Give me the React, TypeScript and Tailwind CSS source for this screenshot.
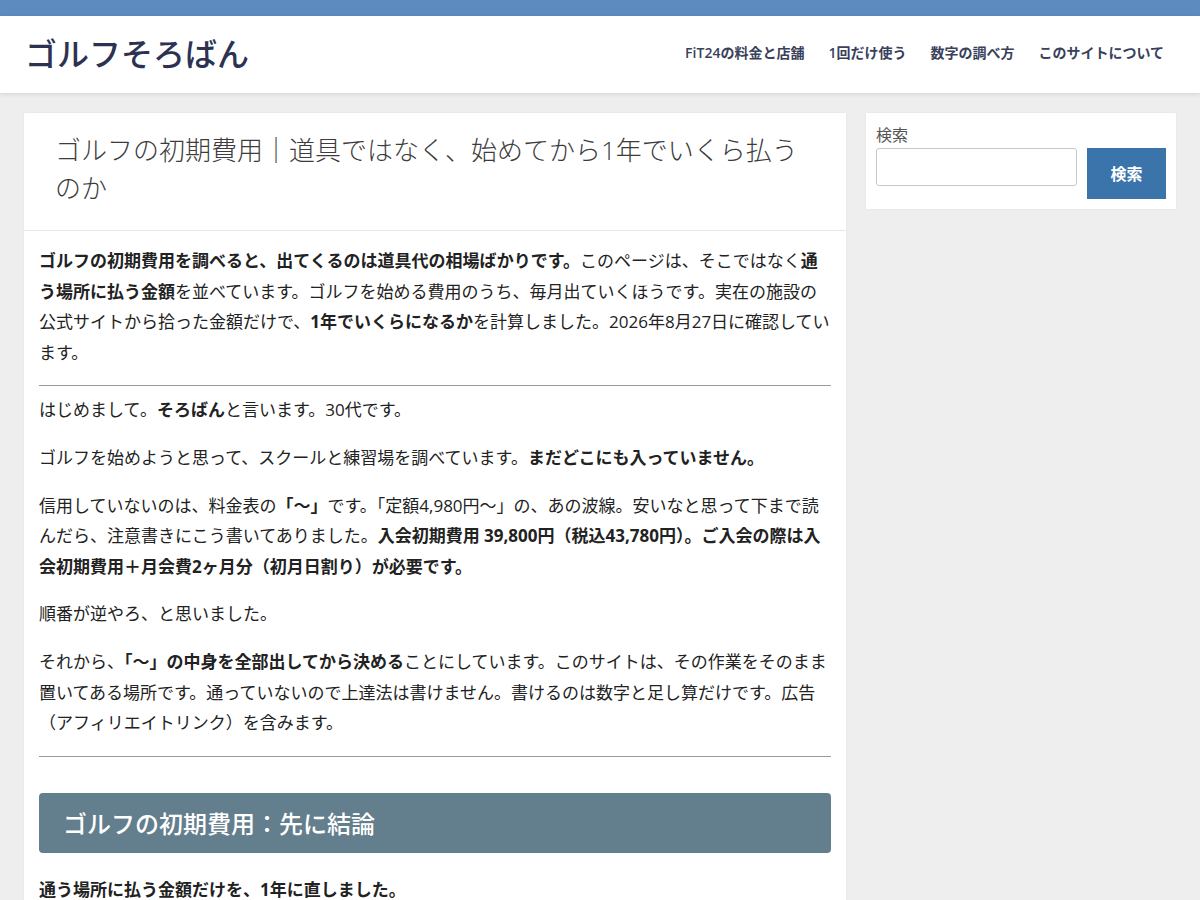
import React from "react";

const font = "font-['Open_Sans','Noto_Sans_CJK_JP',sans-serif]";

export default function App() {
  return (
    <div className={`min-h-screen bg-[#eeeeee] ${font}`}>
      <div className="h-4 bg-[#5d8bc0]" />
      <header className="h-[77px] bg-white shadow-[0_1px_4px_rgba(0,0,0,0.12)] flex items-center justify-between pl-[25px] pr-[36px] relative">
        <div className="text-[32px] leading-none font-medium text-[#2d3252] font-['Noto_Sans_CJK_JP',sans-serif] -mt-[6px]">
          ゴルフそろばん
        </div>
        <nav className="flex gap-6 text-[14px] font-semibold text-[#3a3f5c] -mt-[4px]">
          <a>FiT24の料金と店舗</a>
          <a>1回だけ使う</a>
          <a>数字の調べ方</a>
          <a>このサイトについて</a>
        </nav>
      </header>
      <div className="flex items-start gap-5 px-6 pt-5">
        <main className="w-[822px] bg-white shadow-[0_0_2px_rgba(0,0,0,0.06)]">
          <div className="pl-[31px] pr-[39px] pt-[18px] pb-[23px] border-b border-[#e6e6e6]">
            <h1 className="text-[26px] leading-[38px] font-light text-[#3c3c3c]">
              ゴルフの初期費用｜道具ではなく、始めてから1年でいくら払うのか
            </h1>
          </div>
          <div className="px-[15px] pt-[15px] pb-6 text-[17px] leading-[1.8] text-[#222]">
            <p className="mb-[17px]">
              <b>ゴルフの初期費用を調べると、出てくるのは道具代の相場ばかりです。</b>
              このページは、そこではなく<b>通う場所に払う金額</b>
              を並べています。ゴルフを始める費用のうち、毎月出ていくほうです。実在の施設の公式サイトから拾った金額だけで、
              <b>1年でいくらになるか</b>を計算しました。2026年8月27日に確認しています。
            </p>
            <hr className="border-t border-[#9a9a9a] mt-[1px] mb-[9px]" />
            <p className="mb-[17px]">
              はじめまして。<b>そろばん</b>と言います。30代です。
            </p>
            <p className="mb-[17px]">
              ゴルフを始めようと思って、スクールと練習場を調べています。
              <b>まだどこにも入っていません。</b>
            </p>
            <p className="mb-[17px]">
              信用していないのは、料金表の<b>「〜」</b>です。「定額4,980円〜」の、あの波線。安いなと思って下まで読んだら、注意書きにこう書いてありました。
              <b>入会初期費用 39,800円（税込43,780円）。ご入会の際は入会初期費用＋月会費2ヶ月分（初月日割り）が必要です。</b>
            </p>
            <p className="mb-[17px]">順番が逆やろ、と思いました。</p>
            <p className="mb-[17px]">
              それから、<b>「〜」の中身を全部出してから決める</b>
              ことにしています。このサイトは、その作業をそのまま置いてある場所です。通っていないので上達法は書けません。書けるのは数字と足し算だけです。広告（アフィリエイトリンク）を含みます。
            </p>
            <hr className="border-t border-[#9a9a9a] mt-[2px] mb-[36px]" />
            <h2 className="h-[60px] rounded-[4px] bg-[#637e8c] text-white text-[24px] font-medium flex items-center px-6 font-['Noto_Sans_CJK_JP',sans-serif]">
              ゴルフの初期費用：先に結論
            </h2>
            <p className="mt-[22px] mb-[17px]">
              <b>通う場所に払う金額だけを、1年に直しました。</b>
            </p>
          </div>
        </main>
        <aside className="w-[310px] bg-white p-[10px] shadow-[0_0_2px_rgba(0,0,0,0.06)]">
          <label className="block text-[16px] leading-[24px] text-[#555] mb-[1px]">
            検索
          </label>
          <div className="flex items-start gap-[10px]">
            <input
              type="text"
              className="w-[201px] h-[38px] border border-[#c8c8c8] rounded-[3px] outline-none px-2"
            />
            <button className="w-[79px] h-[51px] bg-[#3b73ab] text-white font-bold text-[16px]">
              検索
            </button>
          </div>
        </aside>
      </div>
    </div>
  );
}
